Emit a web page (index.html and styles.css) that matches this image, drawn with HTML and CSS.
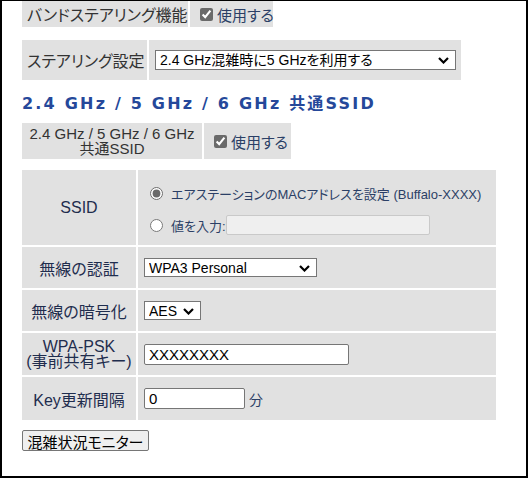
FILE: index.html
```html
<!DOCTYPE html>
<html lang="ja">
<head>
<meta charset="utf-8">
<link rel="stylesheet" href="styles.css">
</head>
<body>
<div class="frame">
  <div class="row row-a">
    <div class="cell lab a1">バンドステアリング機能</div>
    <div class="cell a2"><label class="chk"><input type="checkbox" checked><span>使用する</span></label></div>
  </div>
  <div class="row row-b">
    <div class="cell lab b1">ステアリング設定</div>
    <div class="cell b2">
      <span class="selw"><select class="sel sel-steer"><option>2.4 GHz混雑時に5 GHzを利用する</option></select><svg class="chev" width="11" height="7" viewBox="0 0 11 7"><path d="M1 1 L5.5 5.5 L10 1" fill="none" stroke="#000" stroke-width="2.2"/></svg></span>
    </div>
  </div>
  <h2 class="heading">2.4 GHz / 5 GHz / 6 GHz 共通SSID</h2>
  <div class="row row-c">
    <div class="cell lab c1"><span class="ln">2.4 GHz / 5 GHz / 6 GHz</span><span class="ln">共通SSID</span></div>
    <div class="cell c2"><label class="chk"><input type="checkbox" checked><span>使用する</span></label></div>
  </div>
  <div class="grid">
    <div class="gl r1">SSID</div>
    <div class="gv r1 ssid">
      <label class="rad"><input type="radio" name="s" checked><span>エアステーションのMACアドレスを設定 (Buffalo-XXXX)</span></label>
      <label class="rad"><input type="radio" name="s"><span>値を入力:</span><input class="txt ssid-in" type="text" disabled></label>
    </div>
    <div class="gl r2">無線の認証</div>
    <div class="gv r2"><span class="selw"><select class="sel sel-auth"><option>WPA3 Personal</option></select><svg class="chev" width="11" height="7" viewBox="0 0 11 7"><path d="M1 1 L5.5 5.5 L10 1" fill="none" stroke="#000" stroke-width="2.2"/></svg></span></div>
    <div class="gl r3">無線の暗号化</div>
    <div class="gv r3"><span class="selw"><select class="sel sel-enc"><option>AES</option></select><svg class="chev" width="11" height="7" viewBox="0 0 11 7"><path d="M1 1 L5.5 5.5 L10 1" fill="none" stroke="#000" stroke-width="2.2"/></svg></span></div>
    <div class="gl r4 two"><span class="ln">WPA-PSK</span><span class="ln">(事前共有キー)</span></div>
    <div class="gv r4"><input class="txt psk" type="text" value="XXXXXXXX"></div>
    <div class="gl r5">Key更新間隔</div>
    <div class="gv r5"><input class="txt key" type="text" value="0"><span class="unit">分</span></div>
  </div>
  <button class="btn">混雑状況モニター</button>
</div>
</body>
</html>
```

FILE: styles.css
```css
* { box-sizing: border-box; }
html, body { margin: 0; padding: 0; background: #fff; }
body {
  font-family: "Liberation Sans", "Noto Sans CJK JP", sans-serif;
  font-size: 15px;
  color: #333;
  font-feature-settings: "palt";
  white-space: nowrap;
}
.frame {
  width: 528px;
  height: 478px;
  border: 2px solid #000;
  border-top-width: 1px;
  padding-left: 20px;
  overflow: hidden;
}
.row { display: flex; gap: 2px; }
.cell {
  background: #e1e1e1;
  display: flex;
  align-items: center;
}
.lab { color: #333; font-size: 16px; }
.row-a { height: 26px; }
.a1 { width: 166px; padding-left: 5px; }
.a2 { width: 83px; padding-left: 10px; }
.row-b { height: 40px; margin-top: 13px; }
.b1 { width: 125px; padding-left: 5px; }
.b2 { width: 312px; padding-left: 6px; }
.heading {
  margin: 14px 0 9px;
  font-size: 16px;
  line-height: 20px;
  font-weight: bold;
  color: #25489a;
  letter-spacing: 2.2px;
  font-family: "DejaVu Sans", "Noto Sans CJK JP", sans-serif;
}
.row-c { height: 36px; }
.c1 {
  width: 180px;
  flex-direction: column;
  justify-content: center;
  text-align: center;
  font-size: 15px;
}
.ln { display: block; line-height: 15px; }
.c2 { width: 87px; padding-left: 10px; }
.chk { display: flex; align-items: center; gap: 4px; color: #2b3f66; font-size: 15px; }
.chk input, .rad input[type=radio] {
  margin: 0;
  width: 13px;
  height: 13px;
  accent-color: #6a6a6a;
}
.selw { position: relative; display: inline-flex; }
.chev { position: absolute; right: 7px; top: 50%; margin-top: -3px; pointer-events: none; }
.sel {
  -webkit-appearance: none;
  appearance: none;
  height: 20px;
  font-family: "Liberation Sans", "Noto Sans CJK JP", sans-serif;
  font-size: 14px;
  color: #000;
  background: #fff;
  border: 1px solid #767676;
  border-radius: 0;
  padding: 0 4px;
  font-feature-settings: "palt";
}
.sel-steer { width: 301px; }
.grid {
  margin-top: 11px;
  display: grid;
  grid-template-columns: 114px 358px;
  grid-template-rows: 75px 41px 41px 42px 43px;
  gap: 2px;
}
.gl {
  background: #e1e1e1;
  color: #1f2d4e;
  font-size: 16px;
  display: flex;
  flex-direction: column;
  align-items: center;
  justify-content: center;
  text-align: center;
}
.gv {
  background: #e1e1e1;
  display: flex;
  align-items: center;
  padding-left: 6px;
  color: #2b3f66;
}
.ssid {
  flex-direction: column;
  align-items: flex-start;
  justify-content: flex-start;
  padding-left: 12px;
  padding-top: 14px;
  gap: 12px;
  font-size: 13px;
}
.rad { display: flex; align-items: center; gap: 8px; }
.txt {
  height: 21px;
  border: 1px solid #767676;
  border-radius: 2px;
  background: #fff;
  font-family: "Liberation Sans", sans-serif;
  font-size: 15px;
  color: #000;
  padding: 0 4px;
  margin: 0;
}
.ssid-in {
  width: 204px;
  height: 20px;
  margin-left: -8px;
  background: #efefef;
  border-color: #c9c9c9;
}
.sel-auth { width: 173px; height: 19px; }
.sel-enc { width: 57px; height: 19px; }
.psk { width: 205px; }
.key { width: 101px; }
.unit { margin-left: 4px; font-size: 14px; color: #2b3f66; }
.btn {
  margin-top: 10px;
  width: 127px;
  height: 21px;
  padding: 0;
  font-family: "Liberation Sans", "Noto Sans CJK JP", sans-serif;
  font-size: 15px;
  color: #000;
  background: #efefef;
  border: 1px solid #767676;
  border-radius: 2px;
  display: block;
  font-feature-settings: "palt";
}
```
